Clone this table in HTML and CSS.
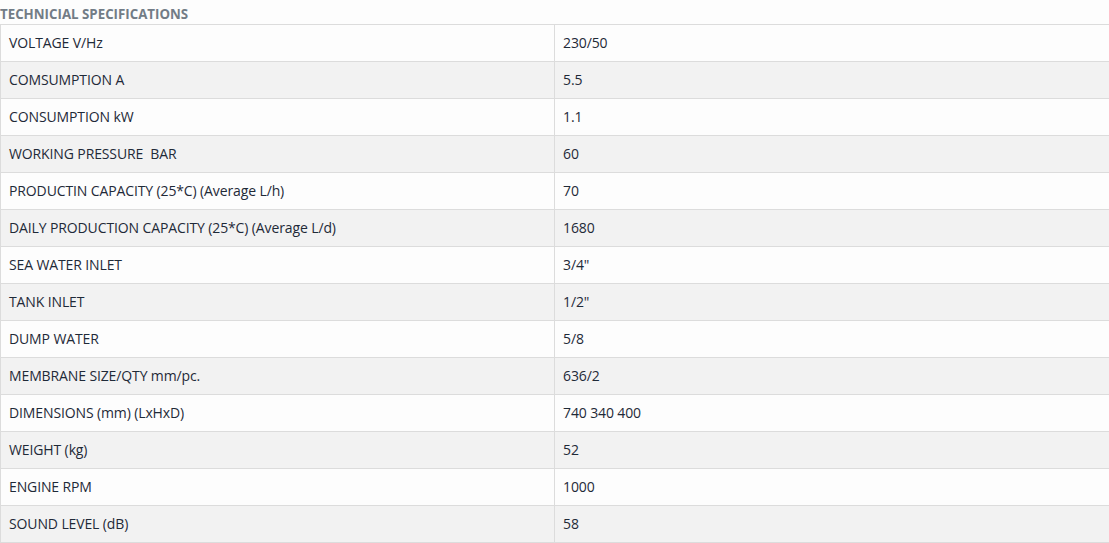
FILE: index.html
```html
<!DOCTYPE html>
<html>
<head>
<meta charset="utf-8">
<link rel="stylesheet" href="styles.css">
</head>
<body>
<div class="specs">
  <h3 class="specs-title">TECHNICIAL SPECIFICATIONS</h3>
  <table class="specs-table">
    <tr><td>VOLTAGE V/Hz</td><td>230/50</td></tr>
    <tr><td>COMSUMPTION A</td><td>5.5</td></tr>
    <tr><td>CONSUMPTION kW</td><td>1.1</td></tr>
    <tr><td>WORKING PRESSURE&nbsp; BAR</td><td>60</td></tr>
    <tr><td>PRODUCTIN CAPACITY (25*C) (Average L/h)</td><td>70</td></tr>
    <tr><td>DAILY PRODUCTION CAPACITY (25*C) (Average L/d)</td><td>1680</td></tr>
    <tr><td>SEA WATER INLET</td><td>3/4"</td></tr>
    <tr><td>TANK INLET</td><td>1/2"</td></tr>
    <tr><td>DUMP WATER</td><td>5/8</td></tr>
    <tr><td>MEMBRANE SIZE/QTY mm/pc.</td><td>636/2</td></tr>
    <tr><td>DIMENSIONS (mm) (LxHxD)</td><td>740 340 400</td></tr>
    <tr><td>WEIGHT (kg)</td><td>52</td></tr>
    <tr><td>ENGINE RPM</td><td>1000</td></tr>
    <tr><td>SOUND LEVEL (dB)</td><td>58</td></tr>
  </table>
</div>
</body>
</html>
```
FILE: styles.css
```css
html, body {
  margin: 0;
  padding: 0;
  background: #fdfdfd;
  overflow: hidden;
}
.specs {
  font-family: "Open Sans", "Noto Sans", sans-serif;
}
.specs-title {
  margin: 0;
  height: 24px;
  line-height: 29px;
  font-size: 13.3px;
  font-weight: 700;
  color: #727c86;
  letter-spacing: 0;
}
.specs-table {
  width: 1110px;
  border-collapse: collapse;
  table-layout: fixed;
}
.specs-table td {
  box-sizing: border-box;
  height: 37px;
  padding: 0 8px 2px;
  border: 1px solid #dcdcdc;
  font-size: 14px;
  color: #1f2a38;
  letter-spacing: -0.12px;
  vertical-align: middle;
}
.specs-table td:first-child {
  width: 554px;
}
.specs-table tr:nth-child(odd) td {
  background: #fdfdfd;
}
.specs-table tr:nth-child(even) td {
  background: #f2f2f2;
}
```
